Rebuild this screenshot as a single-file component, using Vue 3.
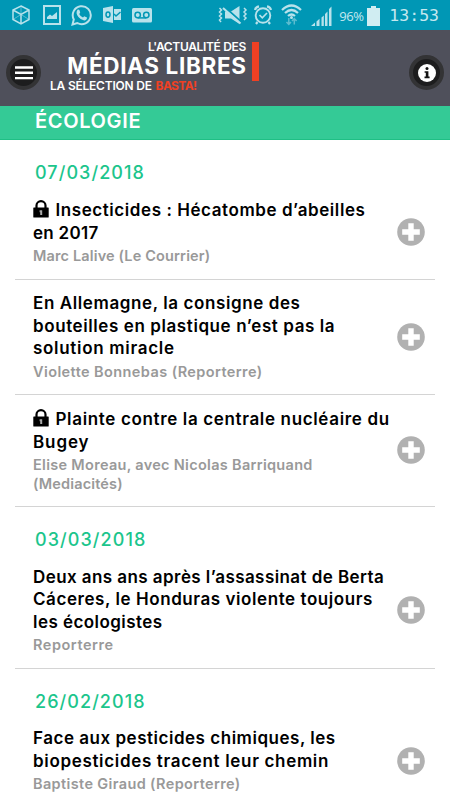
<template>
  <div class="page">
    <div class="status-bar">
      <svg class="ic cube" width="18" height="20" viewBox="0 0 18 20">
        <path d="M9 1 L17 5 V14.5 L9 19 L1 14.5 V5 Z M1 5 L9 9.5 L17 5 M9 9.5 V19" />
        <path class="faint" d="M9 1 V9 M1 14.5 L9 9.5 L17 14.5" />
      </svg>
      <svg class="ic image" width="18" height="20" viewBox="0 0 18 20">
        <rect x="1" y="1" width="16" height="18" stroke-width="2" />
        <path class="fill" d="M4 14 V12 L7 9.5 L9 11 L14 7 V14 Z" />
      </svg>
      <svg class="ic whatsapp" width="21" height="22" viewBox="0 0 21 22">
        <path stroke-width="2" d="M1.5 20.5 L2.8 15.4 A9 9 0 1 1 6.3 19 Z" />
        <path class="fill" d="M6.5 5.8 Q7.5 5 8.4 6 L9.2 8.4 Q9 9.3 8.2 9.9 Q9.4 12.4 12 13.5 L13.2 12.2 L16 13.5 Q16 16.2 13.2 16.4 Q9.8 16 7.4 13 Q4.2 9 6.5 5.8 Z" />
      </svg>
      <svg class="ic outlook" width="18" height="18" viewBox="0 0 18 18">
        <path class="fill" d="M0 2 L10 0 V17 L0 15 Z M11 3 H18 V14 H11 Z" />
        <ellipse class="dark" cx="5" cy="8.6" rx="2" ry="2.7" />
        <path class="dark" d="M11 8 L13 10 L17.5 6" />
      </svg>
      <svg class="ic voicemail" width="20" height="15" viewBox="0 0 20 15">
        <rect class="fill" x="0" y="0" width="20" height="14.5" rx="1.5" />
        <circle class="dark" cx="5.7" cy="7" r="2.7" />
        <circle class="dark" cx="14.3" cy="7" r="2.7" />
        <path class="dark" d="M5.7 9.9 H14.3" />
      </svg>

      <svg class="ic mute" width="30" height="20" viewBox="0 0 30 20">
        <path class="fill" d="M7 6.5 H13 L21.5 1 V19 L13 13.5 H7 Z" />
        <path class="cut" d="M6 1.6 L24 17.6" />
        <path stroke-width="2" d="M5 3 L22.5 18.5" />
        <path stroke-width="1.5" d="M1.5 3 L3.5 5 L1.5 7 L3.5 9 L1.5 11 L3.5 13 L1.5 15 L3 17 M26 3 L28 5 L26 7 L28 9 L26 11 L28 13 L26 15" />
      </svg>
      <svg class="ic alarm" width="18" height="20" viewBox="0 0 18 20">
        <circle cx="9" cy="10.5" r="7.3" stroke-width="1.9" />
        <path stroke-width="1.7" d="M5.5 10 L8.3 12.8 L13 8" />
        <path stroke-width="2.2" d="M1 5 Q1.5 2 5 1.3 M17 5 Q16.5 2 13 1.3 M3.5 17 L2 19 M14.5 17 L16 19" />
      </svg>
      <svg class="ic wifi" width="21" height="22" viewBox="0 0 21 22">
        <path stroke-width="2.2" d="M1 6 Q10.5 -3 20 6 M4 9 Q10.5 3 17 9 M7 12 Q10.5 9 14 12" />
        <circle class="fill" cx="10.5" cy="13.5" r="1.5" />
        <path class="arrows" d="M7.8 14 V20 M5.5 18 L7.8 20.5 L10 18 M13.3 20.5 V14.5 M11 17 L13.3 14.5 L15.6 17" />
      </svg>
      <svg class="ic signal" width="21" height="20" viewBox="0 0 21 20">
        <path class="fill" d="M0 20 L4 16.5 V20 Z M5.5 15.5 L8.5 12.8 V20 H5.5 Z M10.5 11.5 L12.8 9.5 V20 H10.5 Z M14 8 L16.5 5.5 V20 H14 Z M18 3 L20.5 0.5 V20 H18 Z" />
      </svg>
      <span class="percent">96%</span>
      <svg class="ic battery" width="13" height="20" viewBox="0 0 13 20">
        <path class="fill" d="M4 0 H9 V2 H13 V20 H0 V2 H4 Z" />
      </svg>
      <span class="clock">13:53</span>
    </div>

    <header class="app-header">
      <button class="round-btn" aria-label="Menu">
        <svg width="18" height="14" viewBox="0 0 18 14">
          <path d="M0 1.5 H18 M0 6.8 H18 M0 12.1 H18" stroke="#fff" stroke-width="2.4" />
        </svg>
      </button>
      <div class="logo">
        <div class="logo-top">
          <div class="logo-words">
            <span class="logo-small">L'ACTUALITÉ DES</span>
            <span class="logo-big">MÉDIAS LIBRES</span>
          </div>
          <i class="logo-bar"></i>
        </div>
        <div class="logo-sub">LA SÉLECTION DE <b>BASTA!</b></div>
      </div>
      <button class="round-btn" aria-label="Informations">
        <svg width="18" height="18" viewBox="0 0 18 18">
          <circle cx="9" cy="9" r="9" fill="#fff" />
          <circle cx="9" cy="4.6" r="1.5" fill="#111" />
          <path d="M6.6 7.2 H10.4 V12.6 H11.6 V14.2 H6.5 V12.6 H7.8 V8.7 H6.6 Z" fill="#111" />
        </svg>
      </button>
    </header>

    <h1 class="category">ÉCOLOGIE</h1>

    <main>
      <section v-for="group in groups" :key="group.date">
        <h2 class="date">{{ group.date }}</h2>
        <article v-for="(item, n) in group.items" :key="n" class="item">
          <div class="item-text">
            <h3>
              <span
                v-for="(line, i) in item.title"
                :key="i"
                class="line"
                :class="{ 'with-lock': item.locked && i === 0 }"
                :style="{ letterSpacing: line.ls + 'px' }"
              >
                <svg v-if="item.locked && i === 0" class="lock" width="16" height="18" viewBox="0 0 16 18">
                  <path d="M3.5 9 V5.5 A4.5 4.3 0 0 1 12.5 5.5 V9" fill="none" stroke="#000" stroke-width="2.2" />
                  <rect x="0.3" y="7.4" width="15.4" height="10.2" rx="0.6" />
                  <path d="M6.6 10.2 H9.2 V15 H7.2 V12.3 H6.6 Z" fill="#aaa" />
                </svg>{{ line.text }}
              </span>
            </h3>
            <p>
              <span
                v-for="(line, i) in item.source"
                :key="i"
                class="line"
                :style="{ letterSpacing: line.ls + 'px' }"
              >{{ line.text }}</span>
            </p>
          </div>
          <svg class="plus" width="28" height="28" viewBox="0 0 28 28">
            <circle cx="14" cy="14" r="13.8" fill="#b1b1b1" />
            <path d="M14 5.2 V22.8 M5.2 14 H22.8" stroke="#fff" stroke-width="5.4" />
          </svg>
        </article>
      </section>
    </main>
  </div>
</template>

<script setup>
// ls: letter spacing of the line, in px
const groups = [
  {
    date: '07/03/2018',
    items: [
      {
        locked: true,
        title: [
          { text: 'Insecticides : Hécatombe d’abeilles', ls: 0.57 },
          { text: 'en 2017', ls: 0.29 }
        ],
        source: [{ text: 'Marc Lalive (Le Courrier)', ls: 0.15 }]
      },
      {
        title: [
          { text: 'En Allemagne, la consigne des', ls: 0.6 },
          { text: 'bouteilles en plastique n’est pas la', ls: 0.59 },
          { text: 'solution miracle', ls: 0.7 }
        ],
        source: [{ text: 'Violette Bonnebas (Reporterre)', ls: 0.41 }]
      },
      {
        locked: true,
        title: [
          { text: 'Plainte contre la centrale nucléaire du', ls: 0.65 },
          { text: 'Bugey', ls: 0.88 }
        ],
        source: [
          { text: 'Elise Moreau, avec Nicolas Barriquand', ls: 0.3 },
          { text: '(Mediacités)', ls: 0.16 }
        ]
      }
    ]
  },
  {
    date: '03/03/2018',
    items: [
      {
        title: [
          { text: 'Deux ans ans après l’assassinat de Berta', ls: 0.43 },
          { text: 'Cáceres, le Honduras violente toujours', ls: 0.57 },
          { text: 'les écologistes', ls: 0.44 }
        ],
        source: [{ text: 'Reporterre', ls: 0.53 }]
      }
    ]
  },
  {
    date: '26/02/2018',
    items: [
      {
        title: [
          { text: 'Face aux pesticides chimiques, les', ls: 0.52 },
          { text: 'biopesticides tracent leur chemin', ls: 0.67 }
        ],
        source: [{ text: 'Baptiste Giraud (Reporterre)', ls: 0.37 }]
      }
    ]
  }
]
</script>

<style>
body {
  background: #fff;
}
</style>

<style scoped>
.page {
  width: 450px;
  height: 800px;
  overflow: hidden;
  background: #fff;
  font-family: Inter, "Open Sans", sans-serif;
}

.status-bar {
  box-sizing: border-box;
  height: 30px;
  padding: 0 11px 0 12px;
  display: flex;
  align-items: center;
  background: #0097b5;
  color: #c5e8ef;
}

.ic {
  flex: none;
  fill: none;
  stroke: #b8e2eb;
  stroke-width: 1.5;
}

.ic .fill { fill: #b8e2eb; stroke: none; }
.ic .faint { stroke-width: 0.8; opacity: 0.6; }
.ic .dark { fill: none; stroke: #0097b5; stroke-width: 1.5; }
.ic .cut { stroke: #0097b5; stroke-width: 2; }
.ic .arrows { stroke: #5cbccf; stroke-width: 1.5; }

.image { margin-left: 13px; }
.whatsapp { margin-left: 10px; }
.outlook { margin-left: 11px; }
.voicemail { margin-left: 11px; }
.mute { margin-left: auto; }
.alarm { margin-left: 6px; }
.wifi { margin-left: 9px; }
.signal { margin-left: 9px; }

.signal,
.battery {
  margin-top: 1px;
}

.battery .fill {
  fill: #d0edf2;
}

.percent {
  width: 28px;
  margin-left: 7px;
  font: 13px/30px "Open Sans", sans-serif;
  padding-top: 1px;
  letter-spacing: -0.5px;
}

.clock {
  margin-left: 9px;
  padding-top: 2px;
  font: 16.5px/30px "DejaVu Sans Mono", monospace;
}

.app-header {
  box-sizing: border-box;
  height: 76px;
  padding: 0 6px;
  display: flex;
  background: #4f505b;
}

.round-btn {
  box-sizing: border-box;
  flex: none;
  width: 35px;
  height: 35px;
  margin-top: 25px;
  padding: 0;
  display: flex;
  align-items: center;
  justify-content: center;
  border: 4px solid #333335;
  border-radius: 50%;
  background: #1d1d1e;
}

.logo {
  flex: 1;
  margin-left: 9px;
  padding-top: 10px;
  color: #fff;
}

.logo-top {
  width: 209px;
  display: flex;
  justify-content: flex-end;
  gap: 6px;
}

.logo-words {
  display: flex;
  flex-direction: column;
  align-items: flex-end;
  white-space: nowrap;
}

.logo-small {
  font-size: 12px;
  font-weight: 600;
  line-height: 14px;
  letter-spacing: -0.33px;
}

.logo-big {
  margin-right: -0.6px;
  font-size: 22.5px;
  font-weight: 700;
  line-height: 24px;
  letter-spacing: 0.65px;
}

.logo-bar {
  width: 7px;
  height: 39px;
  margin-top: 2px;
  background: #f04023;
}

.logo-sub {
  margin-top: -2px;
  font-size: 12px;
  font-weight: 600;
  line-height: 14px;
  letter-spacing: -0.22px;
}

.logo-sub b {
  margin-left: 1px;
  font-weight: 700;
  letter-spacing: -0.6px;
  color: #f04023;
}

.category {
  box-sizing: border-box;
  height: 34px;
  margin: 0;
  padding-left: 35px;
  border-bottom: 1px solid #1fbf85;
  background: #34ca96;
  color: #fff;
  font-size: 20px;
  font-weight: 600;
  line-height: 30px;
  letter-spacing: 0.65px;
}

.date {
  margin: 0;
  padding: 20px 0 0.4px 35px;
  color: #1cc58c;
  font-size: 18px;
  font-weight: 500;
  line-height: 26px;
  letter-spacing: 1.07px;
}

.item {
  margin: 0 15px;
  padding: 12px 10px 13px 18px;
  display: flex;
  align-items: center;
  justify-content: space-between;
  border-bottom: 1px solid #d4d4d4;
}

.item-text h3,
.item-text p {
  margin: 0;
  font-weight: 600;
}

.item-text h3 {
  color: #000;
  font-size: 17px;
  line-height: 22.5px;
}

.item-text p {
  margin-top: 3px;
  color: #999;
  font-size: 14.5px;
  line-height: 18.6px;
}

.line {
  display: block;
  white-space: nowrap;
}

.with-lock {
  padding-top: 1.1px;
}

.lock {
  margin-right: 6.5px;
  vertical-align: -2px;
}

.plus {
  flex: none;
}
</style>
